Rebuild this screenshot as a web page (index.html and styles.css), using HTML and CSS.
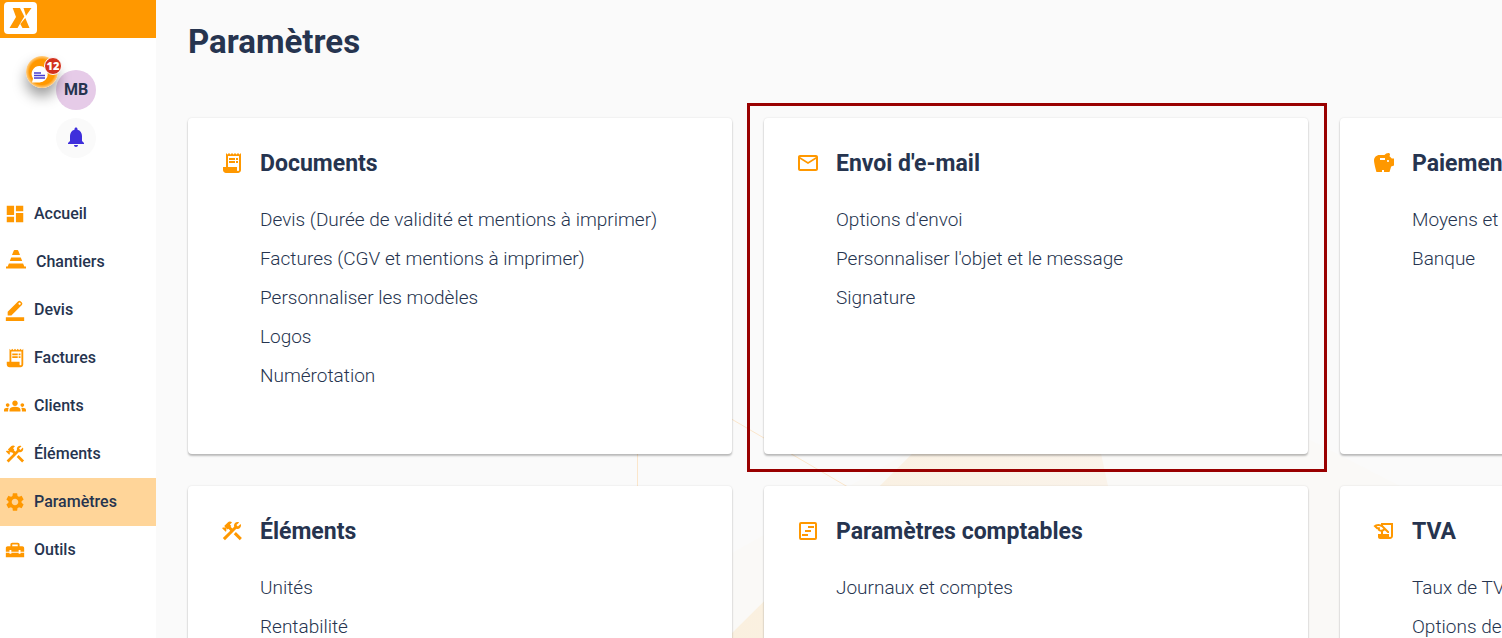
FILE: index.html
```html
<!DOCTYPE html>
<html lang="fr">

<head>
    <meta charset="UTF-8">
    <meta name="viewport" content="width=device-width, initial-scale=1.0">
    <title>Paramètres</title>
    <link rel="stylesheet" href="styles.css">
</head>

<body>
    <!-- Icons used more than once -->
    <svg class="sprite" aria-hidden="true">
        <symbol id="icon-receipt" viewBox="0 0 24 24">
            <path d="M19.5 3.5L18 2l-1.5 1.5L15 2l-1.5 1.5L12 2l-1.5 1.5L9 2 7.5 3.5 6 2v14H3v3c0 1.66 1.34 3 3 3h12c1.66 0 3-1.34 3-3V2l-1.5 1.5zM19 19c0 .55-.45 1-1 1s-1-.45-1-1v-3H8V5h11v14z" />
            <path d="M9 7h6v2H9zM16 7h2v2h-2zM9 10h6v2H9zM16 10h2v2h-2z" />
        </symbol>
        <symbol id="icon-tools" viewBox="0 0 24 24">
            <path d="M13.783 15.172l2.121-2.121 5.996 5.996-2.121 2.121zM17.5 10c1.93 0 3.5-1.57 3.5-3.5 0-.58-.16-1.12-.41-1.6l-2.7 2.7-1.49-1.49 2.7-2.7c-.48-.25-1.02-.41-1.6-.41C15.57 3 14 4.57 14 6.5c0 .41.08.8.21 1.16l-1.85 1.85-1.78-1.78.71-.71-1.41-1.41L12 3.49c-1.17-1.17-3.07-1.17-4.24 0L4.22 7.03l1.41 1.41H2.81l-.71.71 3.54 3.54.71-.71V9.15l1.41 1.41.71-.71 1.78 1.78-7.41 7.41 2.12 2.12L16.34 9.79c.36.13.75.21 1.16.21z" />
        </symbol>
    </svg>

    <aside class="sidebar">
        <div class="brand">
            <a href="#" class="logo" aria-label="Accueil">
                <svg viewBox="0 0 32 32">
                    <path d="M8.700 6H16l4.300 8.500L13.500 26h-8l6.500-11zM19.500 6h8l-5.500 7.800zM21.300 16l4.200 10h-7L16.300 22z" />
                </svg>
            </a>
        </div>

        <div class="profile">
            <button type="button" class="avatar"><span>MB</span></button>
            <button type="button" class="bell" aria-label="Notifications">
                <svg class="icon" viewBox="0 0 24 24">
                    <path d="M12 22c1.1 0 2-.9 2-2h-4c0 1.1.89 2 2 2zm6-6v-5c0-3.07-1.64-5.64-4.5-6.32V4c0-.83-.67-1.5-1.5-1.5s-1.5.67-1.5 1.5v.68C7.63 5.36 6 7.92 6 11v5l-2 2v1h16v-1l-2-2z" />
                </svg>
            </button>
            <button type="button" class="chat" aria-label="Messages">
                <svg viewBox="0 0 32 32">
                    <path class="bubble" d="M13.500 10a8 8 0 1 1 0 16.500H6l1-4a8 8 0 0 1 6.500-12.500z" />
                    <path class="lines" d="M8 17h7M8 19.500h11M8 22h11" />
                </svg>
                <span class="badge">12</span>
            </button>
        </div>

        <nav class="menu">
            <a href="#" class="menu-item">
                <svg class="icon" viewBox="0 0 24 24"><path d="M3 13h8V3H3v10zm0 8h8v-6H3v6zm10 0h8V11h-8v10zm0-18v6h8V3h-8z" /></svg>
                <span>Accueil</span>
            </a>
            <a href="#" class="menu-item">
                <svg class="icon icon-cone" viewBox="0 0 24 24"><path d="M10.500 0h3q.5 0 .8.700L16 5H8l1.700-4.300q.3-.7.800-.7zM7.200 7.500h9.600l1.400 3.500H5.800zM4.900 13.500h14.200l1.200 3H22v2H2v-2h1.700z" /></svg>
                <span>Chantiers</span>
            </a>
            <a href="#" class="menu-item">
                <svg class="icon" viewBox="0 0 24 24"><path fill-rule="evenodd" d="M2 20h20v4H2zM4 18v-4L15.500 2.500q1.300-1.200 2.600 0l1.400 1.400q1.200 1.300 0 2.600L8 18zM17 3.800a1.200 1.200 0 1 0 .01 0z" /></svg>
                <span>Devis</span>
            </a>
            <a href="#" class="menu-item">
                <svg class="icon"><use href="#icon-receipt" /></svg>
                <span>Factures</span>
            </a>
            <a href="#" class="menu-item">
                <svg class="icon" viewBox="0 0 24 24"><path d="M12 12.750c1.630 0 3.070.39 4.240.9 1.080.48 1.760 1.560 1.760 2.730V18H6v-1.610c0-1.180.68-2.260 1.760-2.730 1.170-.52 2.610-.91 4.240-.91zM4 13c1.100 0 2-.9 2-2s-.9-2-2-2-2 .9-2 2 .9 2 2 2zm1.130 1.100c-.37-.06-.74-.1-1.130-.1-.99 0-1.930.21-2.780.58C.48 14.900 0 15.620 0 16.430V18h4.500v-1.610c0-.83.23-1.610.63-2.290zM20 13c1.100 0 2-.9 2-2s-.9-2-2-2-2 .9-2 2 .9 2 2 2zm4 3.430c0-.81-.48-1.530-1.220-1.850-.85-.37-1.790-.58-2.780-.58-.39 0-.76.04-1.130.1.400.68.63 1.460.63 2.290V18H24v-1.570zM12 6c1.660 0 3 1.340 3 3s-1.340 3-3 3-3-1.340-3-3 1.340-3 3-3z" /></svg>
                <span>Clients</span>
            </a>
            <a href="#" class="menu-item">
                <svg class="icon"><use href="#icon-tools" /></svg>
                <span>Éléments</span>
            </a>
            <a href="#" class="menu-item active">
                <svg class="icon" viewBox="0 0 24 24"><path d="M19.140 12.940c.04-.3.06-.61.06-.94 0-.32-.02-.64-.07-.94l2.030-1.580c.18-.14.23-.41.12-.61l-1.920-3.320c-.12-.22-.37-.29-.59-.22l-2.390.96c-.5-.38-1.030-.7-1.620-.94l-.36-2.540c-.04-.24-.24-.41-.48-.41h-3.840c-.24 0-.43.17-.47.41l-.36 2.540c-.59.24-1.130.57-1.620.94l-2.390-.96c-.22-.08-.47 0-.59.22L2.740 8.870c-.12.21-.08.47.12.61l2.030 1.580c-.05.3-.09.63-.09.94s.02.64.07.94l-2.030 1.580c-.18.14-.23.41-.12.61l1.920 3.320c.12.22.37.29.59.22l2.390-.96c.5.38 1.030.7 1.620.94l.36 2.540c.05.24.24.41.48.41h3.840c.24 0 .44-.17.47-.41l.36-2.540c.59-.24 1.130-.56 1.620-.94l2.390.96c.22.08.47 0 .59-.22l1.920-3.320c.12-.22.07-.47-.12-.61l-2.010-1.580zM12 15.600c-1.980 0-3.600-1.620-3.600-3.600s1.620-3.600 3.600-3.600 3.600 1.620 3.600 3.600-1.620 3.600-3.600 3.600z" /></svg>
                <span>Paramètres</span>
            </a>
            <a href="#" class="menu-item">
                <svg class="icon" viewBox="0 0 24 24"><path d="M18 16h-2v-1H8v1H6v-1H2v5h20v-5h-4v1zM20 8h-3V6c0-1.100-.9-2-2-2H9c-1.100 0-2 .9-2 2v2H4c-1.100 0-2 .9-2 2v4h4v-2h2v2h8v-2h2v2h4v-4c0-1.100-.9-2-2-2zm-5 0H9V6h6v2z" /></svg>
                <span>Outils</span>
            </a>
        </nav>
    </aside>

    <main class="content">
        <!-- Decorative shapes behind the cards -->
        <svg class="backdrop" width="1346" height="638" viewBox="156 0 1346 638" aria-hidden="true">
            <defs>
                <linearGradient id="peach" x1="0" x2="1" y1="0" y2="0">
                    <stop offset="0" stop-color="#faf0df" />
                    <stop offset="1" stop-color="#faf3ea" />
                </linearGradient>
            </defs>
            <path fill="#faf9f7" d="M732 553L930 440H1310L1400 486V638H732z" />
            <path fill="url(#peach)" d="M936 430H1096L1108 486V638H727z" />
            <path fill="none" stroke="#fbe6cb" d="M637.500 400V500M716 410L865 497" />
        </svg>

        <h1>Paramètres</h1>

        <div class="cards">
            <section class="card">
                <svg class="icon"><use href="#icon-receipt" /></svg>
                <h2>Documents</h2>
                <ul>
                    <li><a href="#">Devis (Durée de validité et mentions à imprimer)</a></li>
                    <li><a href="#">Factures (CGV et mentions à imprimer)</a></li>
                    <li><a href="#">Personnaliser les modèles</a></li>
                    <li><a href="#">Logos</a></li>
                    <li><a href="#">Numérotation</a></li>
                </ul>
            </section>

            <section class="card highlighted">
                <svg class="icon" viewBox="0 0 24 24"><path d="M22 6c0-1.100-.9-2-2-2H4c-1.100 0-2 .9-2 2v12c0 1.100.9 2 2 2h16c1.100 0 2-.9 2-2V6zm-2 0l-8 5-8-5h16zm0 12H4V8l8 5 8-5v10z" /></svg>
                <h2>Envoi d'e-mail</h2>
                <ul>
                    <li><a href="#">Options d'envoi</a></li>
                    <li><a href="#">Personnaliser l'objet et le message</a></li>
                    <li><a href="#">Signature</a></li>
                </ul>
            </section>

            <section class="card">
                <svg class="icon" viewBox="0 0 24 24"><path d="M19.830 7.500l-2.270-2.270c.07-.42.18-.81.32-1.150.08-.18.12-.37.12-.58 0-.83-.67-1.500-1.500-1.500-1.640 0-3.090.79-4 2H7.500C4.460 4 2 6.460 2 9.500S4.500 21 4.500 21H10v-2h2v2h5.500l1.680-5.590 2.820-.94V7.500h-2.170zM13 9H8V7h5v2zm3 2c-.55 0-1-.45-1-1s.45-1 1-1 1 .45 1 1-.45 1-1 1z" /></svg>
                <h2>Paiements</h2>
                <ul>
                    <li><a href="#">Moyens et conditions</a></li>
                    <li><a href="#">Banque</a></li>
                </ul>
            </section>

            <section class="card">
                <svg class="icon"><use href="#icon-tools" /></svg>
                <h2>Éléments</h2>
                <ul>
                    <li><a href="#">Unités</a></li>
                    <li><a href="#">Rentabilité</a></li>
                </ul>
            </section>

            <section class="card">
                <svg class="icon" viewBox="0 0 24 24"><path fill-rule="evenodd" d="M5 3h14a2 2 0 0 1 2 2v14a2 2 0 0 1-2 2H5a2 2 0 0 1-2-2V5a2 2 0 0 1 2-2zM5 5v14h14V5zM12 7h6v2h-6zM9 11h6v2H9zM6 15h6v2H6z" /></svg>
                <h2>Paramètres comptables</h2>
                <ul>
                    <li><a href="#">Journaux et comptes</a></li>
                </ul>
            </section>

            <section class="card">
                <svg class="icon" viewBox="0 0 24 24"><path d="M9 4v1.380c-.83-.33-1.720-.5-2.610-.5-1.790 0-3.580.68-4.950 2.050l3.330 3.330h1.110v1.110c.86.86 1.980 1.310 3.110 1.360V15H6v3c0 1.100.9 2 2 2h10c1.660 0 3-1.340 3-3V4H9zm-1.110 6.410V8.260H5.610L4.570 7.220a5.070 5.070 0 0 1 1.820-.34c1.340 0 2.590.52 3.540 1.460l1.410 1.410-.2.200a2.700 2.700 0 0 1-1.920.8c-.47 0-.93-.12-1.330-.34zM19 17c0 .55-.45 1-1 1s-1-.45-1-1v-2h-6v-2.590c.57-.23 1.100-.57 1.560-1.030l.2-.2L15.590 14H17v-1.410l-6-5.970V6h8v11z" /></svg>
                <h2>TVA</h2>
                <ul>
                    <li><a href="#">Taux de TVA</a></li>
                    <li><a href="#">Options de TVA</a></li>
                </ul>
            </section>
        </div>
    </main>
</body>

</html>
```
FILE: styles.css
```css
* {
    margin: 0;
    padding: 0;
    box-sizing: border-box;
}

body {
    display: flex;
    height: 100vh;
    overflow: hidden;
    background-color: #fafafa;
    color: #26344f;
    font-family: Roboto, "Liberation Sans", sans-serif;
}

a {
    color: inherit;
    text-decoration: none;
}

button {
    border: none;
    font-family: inherit;
    color: inherit;
    cursor: pointer;
}

.sprite {
    position: absolute;
    width: 0;
    height: 0;
}

.icon {
    flex: none;
    width: 24px;
    height: 24px;
    fill: #ff9800;
}

/* Sidebar */
.sidebar {
    flex: none;
    width: 156px;
    background-color: #fff;
}

.brand {
    height: 38px;
    padding: 2px 4px;
    background-color: #ff9800;
}

.logo {
    display: block;
    width: 33px;
    height: 32px;
    border-radius: 4px;
    background-color: #fff;
}

.logo svg {
    display: block;
    width: 32px;
    height: 32px;
    fill: #ff9800;
}

.profile {
    position: relative;
    display: flex;
    flex-direction: column;
    align-items: center;
    gap: 8px;
    padding: 32px 4px 32px 0;
}

.avatar,
.bell {
    display: flex;
    align-items: center;
    justify-content: center;
    width: 40px;
    height: 40px;
    padding-bottom: 2px;
    border-radius: 50%;
}

.avatar {
    background-color: #e6cbe8;
    font-size: 16px;
    font-weight: 700;
}

.bell {
    background-color: #fafafa;
}

.bell .icon {
    fill: #3f2fdb;
}

/* Floating chat bubble, partly over the avatar */
.chat {
    position: absolute;
    top: 18px;
    left: 26px;
    width: 32px;
    height: 32px;
    border-radius: 50%;
    background: radial-gradient(circle closest-side, #ff9800 78%, #ffd08a 100%);
    box-shadow: 0 8px 14px rgba(0, 0, 0, 0.4);
}

.chat svg {
    display: block;
    width: 32px;
    height: 32px;
}

.bubble {
    fill: #fff;
}

.lines {
    fill: none;
    stroke: #4a3fd0;
    stroke-width: 1.5;
}

.badge {
    position: absolute;
    top: 1px;
    left: 18px;
    width: 18px;
    height: 18px;
    border: 1px solid #fff;
    border-radius: 50%;
    background-color: #d2321e;
    color: #fff;
    font-family: "Open Sans", sans-serif;
    font-size: 11px;
    font-weight: 800;
    line-height: 16px;
    text-align: center;
}

.menu-item {
    display: flex;
    align-items: center;
    gap: 8px;
    height: 48px;
    padding-left: 4px;
    font-size: 16px;
    font-weight: 500;
}

.menu-item span {
    padding-bottom: 2px;
}

.menu-item .icon {
    width: 22px;
    height: 22px;
}

.menu-item .icon-cone {
    width: 24px;
    height: 24px;
}

.menu-item.active {
    background-color: #ffd599;
}

/* Settings page */
.content {
    position: relative;
    flex: 1;
    min-width: 0;
    overflow: hidden;
    padding: 22px 32px;
}

.backdrop {
    position: absolute;
    top: 0;
    left: 0;
}

h1 {
    position: relative;
    margin-bottom: 56px;
    font-size: 33px;
    font-weight: 700;
    line-height: 40px;
}

.cards {
    position: relative;
    display: grid;
    grid-template-columns: repeat(3, minmax(544px, 1fr));
    grid-auto-rows: minmax(336px, auto);
    gap: 32px;
}

.card {
    position: relative;
    display: grid;
    grid-template-columns: 24px 1fr;
    align-content: start;
    align-items: center;
    gap: 23px 16px;
    padding: 31px 32px;
    border-radius: 4px;
    background-color: #fff;
    box-shadow: 0 2px 2px rgba(0, 0, 0, 0.24), 0 0 2px rgba(0, 0, 0, 0.12);
}

.card h2 {
    padding-top: 2px;
    font-size: 23px;
    font-weight: 700;
    line-height: 26px;
}

.card ul {
    grid-column: 2;
    list-style: none;
}

.card li {
    font-size: 19px;
    font-weight: 300;
    line-height: 39px;
}

/* Red frame around the e-mail card */
.highlighted::after {
    content: "";
    position: absolute;
    inset: -15px -19px -18px -17px;
    border: 3px solid #990000;
    pointer-events: none;
}
```
